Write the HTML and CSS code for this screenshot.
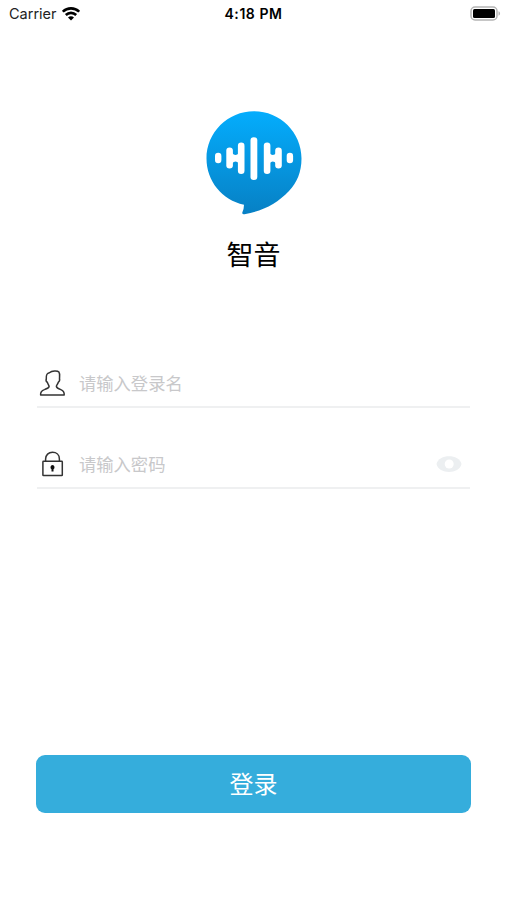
FILE: index.html
```html
<!DOCTYPE html>
<html lang="zh-CN">
<head>
  <meta charset="UTF-8" />
  <meta name="viewport" content="width=device-width, initial-scale=1" />
  <title>智音</title>
  <link rel="stylesheet" href="styles.css">
</head>
<body>
  <div class="status-bar">
    <div class="carrier">
      <span>Carrier</span>
      <svg class="wifi" width="18" height="14" viewBox="0 0 18 14" fill="none" stroke="#000" stroke-width="2.6">
        <path d="M.8 4.700C5.300 .2 12.700 .2 17.200 4.700" />
        <path d="M3.800 8C6.800 5.100 11.200 5.100 14.200 8" />
        <path d="M6 10.400C7.800 8.900 10.200 8.900 12 10.400L9 13.400Z" fill="#000" stroke="none" />
      </svg>
    </div>
    <div class="time">4:18 PM</div>
    <div class="power">
      <svg width="31" height="15" viewBox="0 0 31 15">
        <rect x="1" y="1" width="26" height="13" rx="4" fill="#fff" stroke="#b4b4b4" stroke-width="1.500" />
        <rect x="3" y="3" width="22" height="9" rx="1.500" fill="#000" />
        <path d="M28.500 5.300C30.600 6 30.600 9 28.500 9.700Z" fill="#b4b4b4" />
      </svg>
    </div>
  </div>

  <main class="login">
    <div class="brand">
      <svg class="logo" width="96" height="104" viewBox="0 0 96 104">
        <defs>
          <linearGradient id="bubble" x1="0" y1="0" x2="0" y2="1">
            <stop offset="0" stop-color="#04adfd" />
            <stop offset="1" stop-color="#0780c4" />
          </linearGradient>
        </defs>
        <path fill="url(#bubble)" d="M48 .2C74.200 .2 95.500 21.300 95.500 47.500C95.500 61 91 71.500 83 80C71 92.500 57 100 38.500 103.300Q36 103.700 36.300 101.500Q38 98 38 93.800C16 89 .5 70 .5 47.500C.5 21.300 21.800 .2 48 .2Z" />
        <g fill="#fff">
          <rect x="9" y="41.700" width="6.400" height="10.600" rx="3.200" />
          <rect x="20.300" y="36.500" width="6.600" height="21" rx="3.300" />
          <path d="M26 42Q29.500 46 33 42V52.500Q29.500 48.500 26 52.500Z" />
          <rect x="31.900" y="31.500" width="6.600" height="31.500" rx="3.300" />
          <rect x="44.500" y="26.300" width="6.800" height="42.700" rx="3.200" />
          <rect x="57.800" y="31.500" width="6.600" height="31.500" rx="3.300" />
          <path d="M63.300 42Q66.800 46 70.300 42V52.500Q66.800 48.500 63.300 52.500Z" />
          <rect x="69.200" y="36.500" width="6.600" height="21" rx="3.300" />
          <rect x="80.700" y="41.700" width="6.400" height="10.600" rx="3.200" />
        </g>
      </svg>
      <h1>智音</h1>
    </div>

    <form class="form">
      <label class="field">
        <svg class="icon" width="28" height="28" viewBox="0 0 28 28" fill="none" stroke="#333" stroke-width="1.500" stroke-linejoin="round">
          <path d="M2.600 25.900C2.400 22.800 3.600 21.500 6.400 20.600C8.900 19.700 10.800 19 11.100 17.500C11.100 16.300 9.900 15.200 9.300 13.200C8 12.600 7.900 11 8.300 9.700C8.100 5.500 8.800 4.400 11.400 3.800C13.900 1.500 19.500 1.400 20.900 3C22 4.400 21.600 7 21.500 9.500C21.800 11 21.400 12.700 20.300 13.200C19.700 15.300 18.300 16.400 18.400 17.500C18.700 19 20.600 19.800 22.800 20.600C25.400 21.500 26.400 22.800 26.200 25.900Z" />
        </svg>
        <input type="text" placeholder="请输入登录名" />
      </label>
      <label class="field">
        <svg class="icon" width="28" height="28" viewBox="0 0 28 28" fill="none" stroke="#333" stroke-width="1.500">
          <path d="M5.500 11.300H23.700Q24.300 11.300 24.300 11.900V25Q24.300 25.600 23.700 25.600H5.500Q4.900 25.600 4.900 25V11.900Q4.900 11.300 5.500 11.300Z" />
          <path d="M7.600 11.200V9C7.600 4.900 10.600 2.300 14.500 2.300S21.400 4.900 21.400 9V11.200" />
          <path d="M14.500 15A2.300 2.300 0 0 1 15.500 19.200V21.600H13.500V19.200A2.300 2.300 0 0 1 14.500 15Z" fill="#111" stroke="none" />
        </svg>
        <input type="password" placeholder="请输入密码" />
        <svg class="eye" width="26" height="16" viewBox="0 0 26 16">
          <path d="M.5 8C2.500-2.500 23.500-2.500 25.500 8C23.500 18.500 2.500 18.500 .5 8Z" fill="#eceff1" />
          <circle cx="13.200" cy="8" r="4.500" fill="#fff" />
        </svg>
      </label>
      <button class="submit" type="button">登录</button>
    </form>
  </main>
</body>
</html>
```

FILE: styles.css
```css
* {
  box-sizing: border-box;
}

body {
  margin: 0;
  min-height: 900px;
  background: #fff;
  color: #000;
  font-family: Inter, "Noto Sans CJK SC", sans-serif;
}

.status-bar {
  display: grid;
  grid-template-columns: 1fr auto 1fr;
  align-items: center;
  height: 27px;
  padding: 0 6px 0 9px;
  font-size: 14.5px;
}

.carrier {
  display: flex;
  align-items: center;
  gap: 5px;
  color: #222;
}

.time {
  margin-right: 3px;
  font-size: 14px;
  font-weight: 600;
  letter-spacing: .55px;
}

.power {
  display: flex;
  justify-content: flex-end;
}

.login {
  padding: 84px 36px 0;
}

.brand {
  display: flex;
  flex-direction: column;
  align-items: center;
}

.logo {
  display: block;
}

h1 {
  margin: 21px 0 0;
  font-size: 27px;
  font-weight: 400;
  line-height: 40px;
}

.form {
  display: flex;
  flex-direction: column;
  margin-top: 84px;
}

.field {
  display: flex;
  align-items: center;
  height: 48px;
  margin: 0 1px 33px;
  padding: 0 8px 0 1px;
  border-bottom: 2px solid #eff0f1;
}

.icon {
  flex: none;
}

.field input {
  flex: 1;
  min-width: 0;
  margin-left: 13px;
  padding: 0;
  border: none;
  outline: none;
  background: none;
  font-family: inherit;
  font-size: 17.3px;
}

.field input::placeholder {
  color: #c8c8ca;
}

.submit {
  height: 58px;
  margin-top: 233px;
  padding: 0 0 3px;
  border: none;
  border-radius: 9px;
  background: #35addc;
  color: #fff;
  font-family: inherit;
  font-size: 24px;
  cursor: pointer;
}
```
